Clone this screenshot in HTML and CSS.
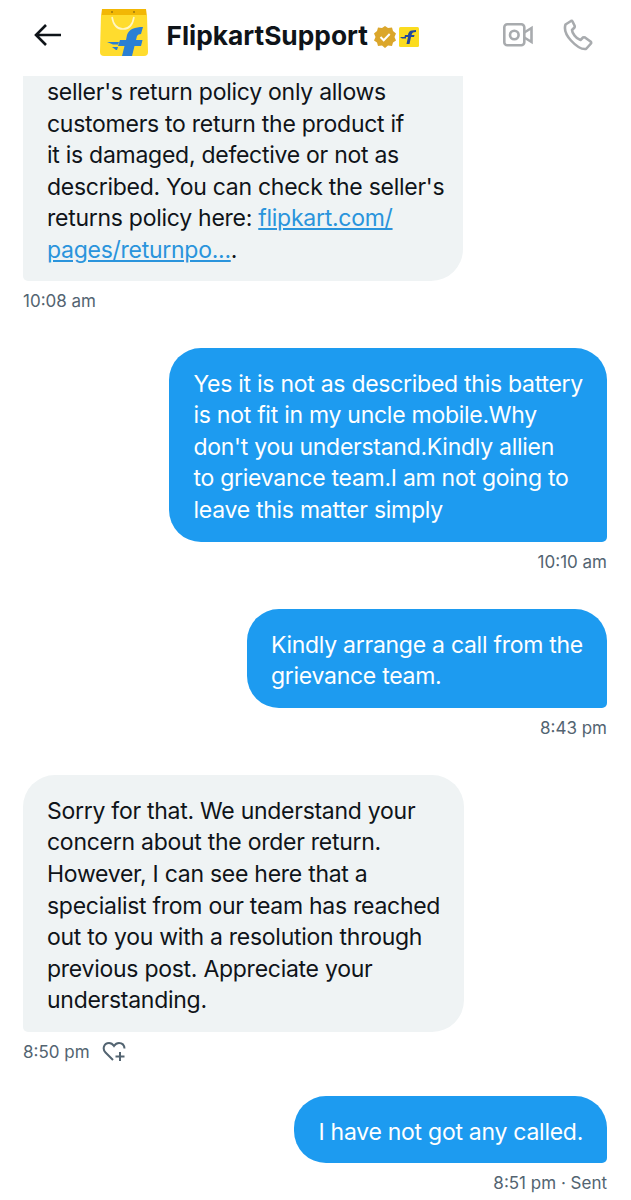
FILE: index.html
```html
<!DOCTYPE html>
<html lang="en">
<head>
  <meta charset="UTF-8">
  <meta name="viewport" content="width=device-width, initial-scale=1.0">
  <title>FlipkartSupport</title>
  <link rel="stylesheet" href="styles.css">
</head>
<body>
  <header class="top-bar">
    <svg class="back-icon" viewBox="0 0 28 24" width="28" height="24" fill="none" stroke="#0f1419" stroke-width="2.6">
      <path d="M27 12H2M12 2 2 12l10 10"/>
    </svg>
    <svg class="logo" viewBox="0 0 50 50" width="50" height="50">
      <path d="M3 1h44l1 8H2z" fill="#f2b705"/>
      <path d="M2 7h46l1 37q0 4-4 4H5q-4 0-4-4z" fill="#ffdc2e"/>
      <circle cx="13" cy="4" r="1" fill="#9c7a10"/>
      <circle cx="35" cy="4" r="1" fill="#9c7a10"/>
      <path d="M13 9q2 12 11 12t11-12" fill="none" stroke="#fff6c4" stroke-width="1.6"/>
      <path d="M44 19C36 19 30 21 28 27L27 32H21L19 38H25.500L23 48H33L35.500 38H42L43.500 32H37L38 28Q39 26 42 26Z" fill="#2a7fd4"/>
      <path d="M8 34H20L19 36.500H14ZM13 39H19L18 42H17Z" fill="#2a7fd4"/>
    </svg>
    <h1 class="name">FlipkartSupport</h1>
    <svg class="badge" viewBox="0 0 22 22" width="22" height="22">
      <path d="M11 0l3 2 4-.5 1 3.500 3 2.500-1.500 3.500 1.500 3.500-3 2-1 3.500-4-.5-3 2.500-3-2.500-4 .5-1-3.500-3-2L1.500 11 0 7.500l3-2.500 1-3.500 4 .5z" fill="#dba62b"/>
      <path d="M6.500 11l3.200 3.200 6-6.200" fill="none" stroke="#fff" stroke-width="2"/>
    </svg>
    <svg class="affiliate" viewBox="0 0 20 20" width="20" height="20">
      <rect width="20" height="20" rx="1.500" fill="#fbdc1f"/>
      <path d="M17 3q-5 0-6.500 1.500T9 8H6l-.5 2H9l-1.500 7h3l1.500-7h3l.5-2h-3q.5-2 1.500-2.500T17 5z" fill="#22479c"/>
      <path d="M1 10h6v1.500H3z" fill="#22479c"/>
    </svg>
    <div class="call-icons">
      <svg viewBox="0 0 30 24" width="30" height="24" fill="none" stroke="#a8abae" stroke-width="2.600">
        <rect x="1.300" y="1.300" width="20" height="21" rx="3"/>
        <circle cx="11.300" cy="12" r="4.300"/>
        <path d="M21.300 9.500 28.500 5v14l-7.200-4.500"/>
      </svg>
      <svg viewBox="0 0 30 32" width="30" height="32" fill="none" stroke="#a8abae" stroke-width="2.600" stroke-linejoin="round">
        <path d="M8 2 2.500 5.500C1 10 3 16 8 21.500s11 9 15 8.500l5-5.500q.5-1-.5-2L22 18.500q-1-.5-2 0l-2.500 2.500Q14 20 11.500 16.500T9 11l2.500-2.500q.5-1 0-2L9.500 2.500Q9 1.500 8 2z"/>
      </svg>
    </div>
  </header>

  <main class="thread">
    <div class="msg them clipped">
      <p class="bubble">seller's return policy only allows<br>customers to return the product if<br>it is damaged, defective or not as<br>described. You can check the seller's<br>returns policy here: <a href="#">flipkart.com/<br>pages/returnpo...</a>.</p>
      <div class="meta">10:08 am</div>
    </div>

    <div class="msg me">
      <p class="bubble">Yes it is not as described this battery<br>is not fit in my uncle mobile.Why<br>don't you understand.Kindly allien<br>to grievance team.I am not going to<br>leave this matter simply</p>
      <div class="meta">10:10 am</div>
    </div>

    <div class="msg me">
      <p class="bubble">Kindly arrange a call from the<br>grievance team.</p>
      <div class="meta">8:43 pm</div>
    </div>

    <div class="msg them tight">
      <p class="bubble">Sorry for that. We understand your<br>concern about the order return.<br>However, I can see here that a<br>specialist from our team has reached<br>out to you with a resolution through<br>previous post. Appreciate your<br>understanding.</p>
      <div class="meta">8:50 pm
        <svg class="react" viewBox="0 0 24 22" width="24" height="22" fill="none" stroke="#536471" stroke-width="2">
          <path d="M11 19 3.500 11.500C0 8 2 2 7 2q3 0 5 3 2-3 5-3 5 0 5.500 5.500"/>
          <path d="M18 11v9M13.500 15.500h9"/>
        </svg>
      </div>
    </div>

    <div class="msg me">
      <p class="bubble">I have not got any called.</p>
      <div class="meta">8:51 pm · Sent</div>
    </div>
  </main>
</body>
</html>
```

FILE: styles.css
```css
html, body {
  margin: 0;
  height: 1200px;
  overflow: hidden;
  background-color: #fff;
  font-family: Inter, "Noto Sans", sans-serif;
  color: #0f1419;
}

.top-bar {
  display: flex;
  align-items: center;
  height: 76px;
  padding: 0 38px 6px 34px;
  box-sizing: border-box;
}

.back-icon {
  margin-right: 37px;
}

.logo {
  margin-right: 17.5px;
  margin-bottom: 4px;
}

.name {
  margin: 0 6px 0 0;
  font-size: 26.3px;
  font-weight: 700;
}

.badge {
  margin-right: 3px;
  margin-top: 3px;
}

.affiliate {
  margin-top: 3px;
}

.call-icons {
  display: flex;
  align-items: center;
  gap: 30px;
  margin-left: auto;
}

.thread {
  display: flex;
  flex-direction: column;
  padding: 0 24px 0 23px;
}

.msg {
  display: flex;
  flex-direction: column;
  margin-bottom: 35px;
}

.tight {
  margin-bottom: 32px;
}

.me {
  align-items: flex-end;
}

.them {
  align-items: flex-start;
}

.bubble {
  margin: 0;
  padding: 21px 24px 15px;
  font-size: 23px;
  letter-spacing: -0.27px;
  line-height: 31.6px;
  border-radius: 32px;
}

.me .bubble {
  background-color: #1d9bf0;
  color: #fff;
  border-bottom-right-radius: 5px;
}

.them .bubble {
  background-color: #eff3f4;
  border-bottom-left-radius: 5px;
}

.clipped .bubble {
  padding: 1px 19px 14px 24px;
  border-top-left-radius: 0;
  border-top-right-radius: 0;
}

.bubble a {
  color: #2a94dc;
}

.meta {
  display: flex;
  align-items: center;
  gap: 12px;
  margin-top: 8px;
  font-size: 17px;
  line-height: 24px;
  color: #536471;
}
```
